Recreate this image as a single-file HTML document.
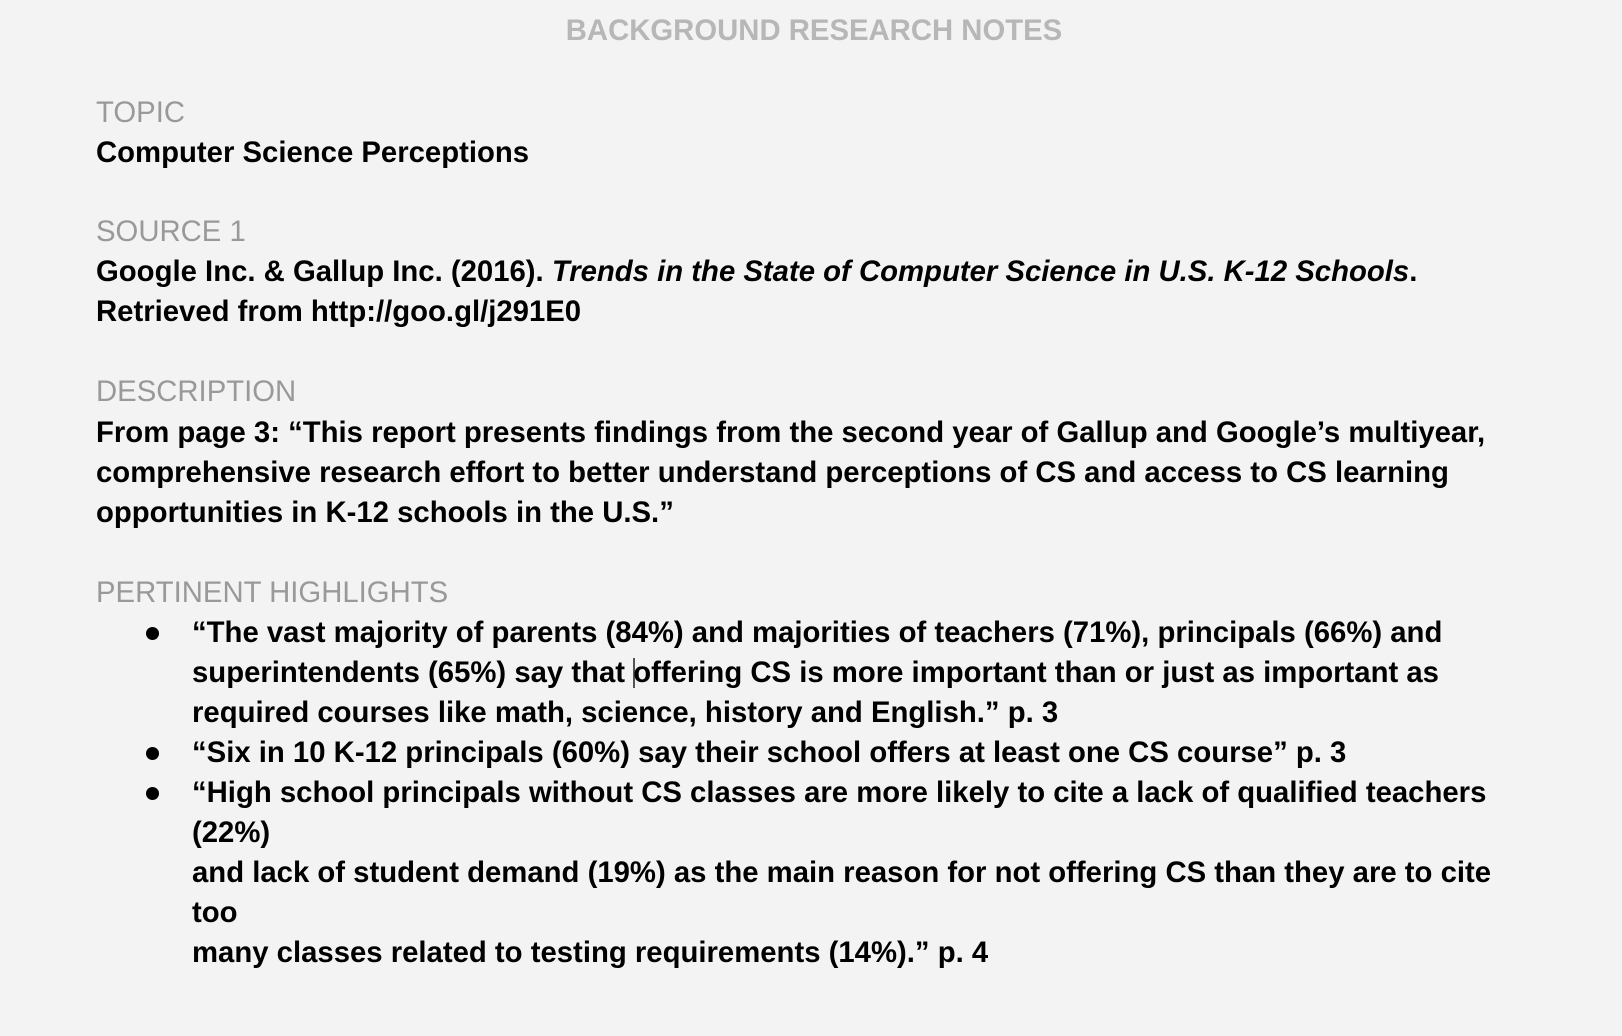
<!DOCTYPE html>
<html><head><meta charset="utf-8"><style>
html,body{margin:0;padding:0;background:#f3f3f3;}
body{width:1622px;height:1036px;position:relative;overflow:hidden;font-family:"Liberation Sans",Arial,sans-serif;}
.l{position:absolute;left:96px;height:40px;line-height:40px;font-size:29.3px;white-space:nowrap;color:#000;font-weight:bold;margin-top:1px;}
.g{color:#999;font-weight:normal;}
.b{left:192px;}
.d{position:absolute;left:146px;width:13px;height:13px;border-radius:50%;background:#000;margin-top:1px;}
.t{position:absolute;left:3px;width:1622px;text-align:center;top:11px;line-height:40px;font-size:29.3px;font-weight:bold;color:#b7b7b7;}
.cur{display:inline-block;width:2px;height:30px;background:#555;vertical-align:-6px;margin-right:-2px;}
</style></head><body>
<div class="t">BACKGROUND RESEARCH NOTES</div>
<div class="l g" style="top:92px">TOPIC</div>
<div class="l" style="top:132px">Computer Science Perceptions</div>
<div class="l g" style="top:211px">SOURCE 1</div>
<div class="l" style="top:251px">Google Inc. &amp; Gallup Inc. (2016). <i>Trends in the State of Computer Science in U.S. K-12 Schools</i>.</div>
<div class="l" style="top:291px">Retrieved from http://goo.gl/j291E0</div>
<div class="l g" style="top:371px">DESCRIPTION</div>
<div class="l" style="top:412px">From page 3: “This report presents findings from the second year of Gallup and Google’s multiyear,</div>
<div class="l" style="top:452px">comprehensive research effort to better understand perceptions of CS and access to CS learning</div>
<div class="l" style="top:492px">opportunities in K-12 schools in the U.S.”</div>
<div class="l g" style="top:572px">PERTINENT HIGHLIGHTS</div>
<div class="d" style="top:626px"></div>
<div class="l b" style="top:612px">“The vast majority of parents (84%) and majorities of teachers (71%), principals (66%) and</div>
<div class="l b" style="top:652px">superintendents (65%) say that <span class="cur"></span>offering CS is more important than or just as important as</div>
<div class="l b" style="top:692px">required courses like math, science, history and English.” p. 3</div>
<div class="d" style="top:746px"></div>
<div class="l b" style="top:732px">“Six in 10 K-12 principals (60%) say their school offers at least one CS course” p. 3</div>
<div class="d" style="top:786px"></div>
<div class="l b" style="top:772px">“High school principals without CS classes are more likely to cite a lack of qualified teachers</div>
<div class="l b" style="top:812px">(22%)</div>
<div class="l b" style="top:852px">and lack of student demand (19%) as the main reason for not offering CS than they are to cite</div>
<div class="l b" style="top:892px">too</div>
<div class="l b" style="top:932px">many classes related to testing requirements (14%).” p. 4</div>
</body></html>
